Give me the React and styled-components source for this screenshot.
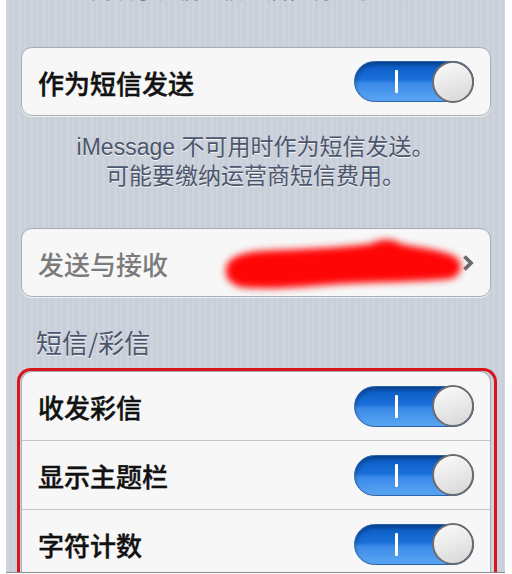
import React from 'react'
import styled, { createGlobalStyle } from 'styled-components'

const GlobalStyle = createGlobalStyle`
    html, body {
        margin: 0;
        padding: 0;
        background: #ffffff;
    }
    body {
        font-family: "Liberation Sans", "Noto Sans CJK SC", sans-serif;
    }
`

const Screen = styled.div`
    margin: 0 7px 0 6px;
    height: 572px;
    overflow: hidden;
    border-bottom: 1px solid #8a8c90;
    background-color: #cbd1db;
    background-image: repeating-linear-gradient(
        90deg,
        rgba(255, 255, 255, 0.05) 0px,
        rgba(255, 255, 255, 0.05) 3px,
        rgba(0, 0, 0, 0.01) 3px,
        rgba(0, 0, 0, 0.01) 6px
    );
`

// tail of the previous group's footer, scrolled mostly off screen
const ScrolledNote = styled.div`
    height: 5px;
    overflow: hidden;
    display: flex;
    align-items: flex-end;
    justify-content: center;
`

const NoteLine = styled.div`
    font-size: 22px;
    line-height: 22px;
    margin-bottom: 3px;
    color: #6a7284;
    white-space: nowrap;
`

const Group = styled.div`
    margin: ${(p) => p.$top || 0}px 14px 0 15px;
    background: #f7f7f7;
    border: 1px solid #a9adb3;
    border-radius: 11px;
    box-shadow: 0 1px 0 rgba(255, 255, 255, 0.7);
    overflow: hidden;
`

const Row = styled.div`
    position: relative;
    display: flex;
    align-items: center;
    height: ${(p) => p.$height || 68}px;
    padding: 0 16px 0 16px;
    border-bottom: ${(p) => (p.$last ? 'none' : '1px solid #c2c4c8')};
`

const Label = styled.span`
    font-family: "Noto Sans CJK SC", sans-serif;
    font-size: 26px;
    font-weight: 500;
    color: ${(p) => (p.$muted ? '#7b7b7b' : '#111111')};
    -webkit-text-stroke: ${(p) => (p.$muted ? '0' : '0.4px #111111')};
    flex: 1;
    padding-top: 1px;
`

const Footer = styled.p`
    margin: 17px 0 0;
    text-align: center;
    font-size: 23px;
    line-height: 29px;
    color: #4c566c;
    text-shadow: 0 1px 0 rgba(255, 255, 255, 0.8);
`

const SectionHeader = styled.h3`
    margin: 30px 0 0 30px;
    font-family: "Noto Sans CJK SC", sans-serif;
    font-size: 26px;
    line-height: 30px;
    font-weight: 400;
    color: #4c566c;
    text-shadow: 0 1px 0 rgba(255, 255, 255, 0.8);
`

const Highlight = styled.div`
    margin: 11px 8px 0 11px;
    border: 3px solid #d8141c;
    border-bottom: none;
    border-radius: 14px 14px 0 0;
    padding: 0 3px 0 1px;

    ${Group} {
        margin: 0;
        border-bottom: none;
        border-radius: 11px 11px 0 0;
    }
`

const Track = styled.span`
    display: flex;
    align-items: center;
    width: 120px;
    height: 41px;
    border-radius: 21px;
    box-sizing: border-box;
    border: 1px solid #2a62a8;
    background: linear-gradient(
        180deg,
        #0a5bc6 0%,
        #1a6fd8 45%,
        #3a8ae8 55%,
        #5aa5f3 100%
    );
    box-shadow: inset 0 3px 4px rgba(0, 0, 0, 0.3);
`

const OnMark = styled.span`
    width: 3px;
    height: 23px;
    margin-left: 40px;
    background: #ffffff;
    border-radius: 1px;
`

const Knob = styled.span`
    margin: -1px -1px -1px auto;
    width: 42px;
    height: 42px;
    box-sizing: border-box;
    border-radius: 50%;
    border: 2px solid #6a6c70;
    background: linear-gradient(160deg, #fbfbfb 0%, #e9e9e9 50%, #d6d6d6 100%);
    box-shadow: inset 0 1px 1px #ffffff;
`

const Scribble = styled.svg`
    position: absolute;
    left: 198px;
    top: 1px;
    filter: blur(3.5px);
    pointer-events: none;
`

function Switch() {
    return (
        <Track>
            <OnMark />
            <Knob />
        </Track>
    )
}

function Chevron() {
    return (
        <svg width="12" height="18" viewBox="0 0 12 18">
            <polyline
                points="2.5,2.5 9,9 2.5,15.5"
                fill="none"
                stroke="#6b6b6b"
                strokeWidth="3.8"
                strokeLinecap="butt"
                strokeLinejoin="miter"
            />
        </svg>
    )
}

const toggles = ['收发彩信', '显示主题栏', '字符计数']

export default function App() {
    return (
        <>
            <GlobalStyle />
            <Screen>
                <ScrolledNote>
                    <NoteLine>在您阅读了他们的信息后，将会收到通知。</NoteLine>
                </ScrolledNote>

                <Group $top={42}>
                    <Row $height={67} $last>
                        <Label>作为短信发送</Label>
                        <Switch />
                    </Row>
                </Group>

                <Footer>
                    iMessage 不可用时作为短信发送。
                    <br />
                    可能要缴纳运营商短信费用。
                </Footer>

                <Group $top={37}>
                    <Row $height={67} $last>
                        <Label $muted>发送与接收</Label>
                        <Scribble width="250" height="70" viewBox="0 0 250 66">
                            <path
                                d="M6,38 C6,26 20,21 40,19 C80,17 120,16 150,12 C160,7 172,6 181,12 C200,16 225,18 237,26 C244,34 241,44 230,47 C200,50 160,50 120,52 C80,55 45,58 20,55 C9,51 5,45 6,38 Z"
                                fill="#ff0606"
                            />
                        </Scribble>
                        <Chevron />
                    </Row>
                </Group>

                <SectionHeader>短信/彩信</SectionHeader>

                <Highlight>
                    <Group>
                        {toggles.map((name, i) => (
                            <Row key={name} $last={i === toggles.length - 1}>
                                <Label>{name}</Label>
                                <Switch />
                            </Row>
                        ))}
                    </Group>
                </Highlight>
            </Screen>
        </>
    )
}
